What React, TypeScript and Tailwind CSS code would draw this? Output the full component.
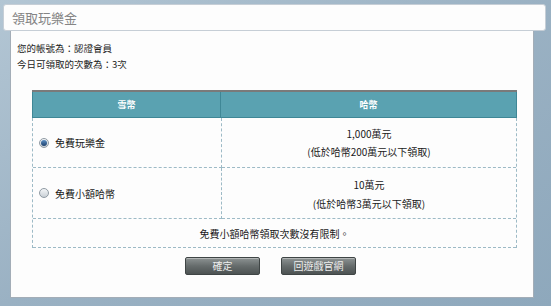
import React from 'react';

const font = { fontFamily: '"Noto Sans CJK TC", "Noto Sans", sans-serif' };

const Radio: React.FC<{ checked?: boolean }> = ({ checked }) => (
    <span className="flex h-[10px] w-[10px] items-center justify-center rounded-full border border-[#8f9aa3] bg-gradient-to-b from-[#f4f6f8] to-[#c9d0d6]">
        {checked && <span className="h-[6px] w-[6px] rounded-full bg-gradient-to-b from-[#5b8fc4] to-[#1d3f6b]" />}
    </span>
);

const Btn: React.FC<{ label: string; w: string }> = ({ label, w }) => (
    <button className={`${w} h-[18px] rounded-[2px] border border-[#3f4545] bg-gradient-to-b from-[#8d9393] via-[#666c6c] to-[#4d5353] text-[10px] leading-none text-[#eeeeee] shadow-[inset_0_1px_0_rgba(255,255,255,0.35)]`}>
        {label}
    </button>
);

export default function App() {
    return (
        <div style={font} className="h-[306px] w-[551px] overflow-hidden bg-gradient-to-br from-[#b3c6d4] via-[#9ab1c3] to-[#8ea8bc] pt-[4px]">
            <div className="ml-[3px] flex h-[27px] w-[543px] items-center rounded-[3px] border border-[#c6ced6] bg-[#fdfdfd] pl-[8px] text-[13px] text-[#858585]">
                領取玩樂金
            </div>
            <div className="ml-[10px] h-[267px] w-[524px] border border-t-0 border-[#a3adb7] bg-[#fdfdfd] pt-[9px] text-[9.5px] text-[#1a1a1a]">
                <div className="pl-[6px] leading-[16px]">
                    <p>您的帳號為：認證會員</p>
                    <p>今日可領取的次數為：3次</p>
                </div>

                <div className="ml-[21px] mt-[18px] w-[485px] text-[10px]">
                    <div className="grid h-[28px] grid-cols-[189px_1fr] border-t-2 border-[#7a7a7a] bg-[#5aa2b1] text-[9px] font-bold text-white">
                        <div className="flex items-center justify-center border-r border-b border-l border-[#3f8796]">雪幣</div>
                        <div className="flex items-center justify-center border-r border-b border-[#3f8796]">哈幣</div>
                    </div>
                    <div className="grid grid-cols-[189px_1fr] border-x border-dashed border-[#9dbac6]">
                        <div className="flex h-[50px] items-center gap-[6px] border-r border-b border-dashed border-[#9dbac6] pl-[6px]">
                            <Radio checked />
                            <span>免費玩樂金</span>
                        </div>
                        <div className="flex h-[50px] flex-col items-center justify-center border-b border-dashed border-[#9dbac6] leading-[18px]">
                            <span>1,000萬元</span>
                            <span>(低於哈幣200萬元以下領取)</span>
                        </div>
                        <div className="flex h-[51px] items-center gap-[6px] border-r border-b border-dashed border-[#9dbac6] pl-[6px]">
                            <Radio />
                            <span>免費小額哈幣</span>
                        </div>
                        <div className="flex h-[51px] flex-col items-center justify-center border-b border-dashed border-[#9dbac6] pt-[2px] leading-[19px]">
                            <span>10萬元</span>
                            <span>(低於哈幣3萬元以下領取)</span>
                        </div>
                        <div className="col-span-2 flex h-[29px] items-center justify-center border-b border-dashed border-[#9dbac6]">
                            免費小額哈幣領取次數沒有限制。
                        </div>
                    </div>
                </div>

                <div className="mt-[9px] flex justify-center gap-[21px] pr-[3px]">
                    <Btn label="確定" w="w-[75px]" />
                    <Btn label="回遊戲官網" w="w-[75px]" />
                </div>
            </div>
        </div>
    );
}
